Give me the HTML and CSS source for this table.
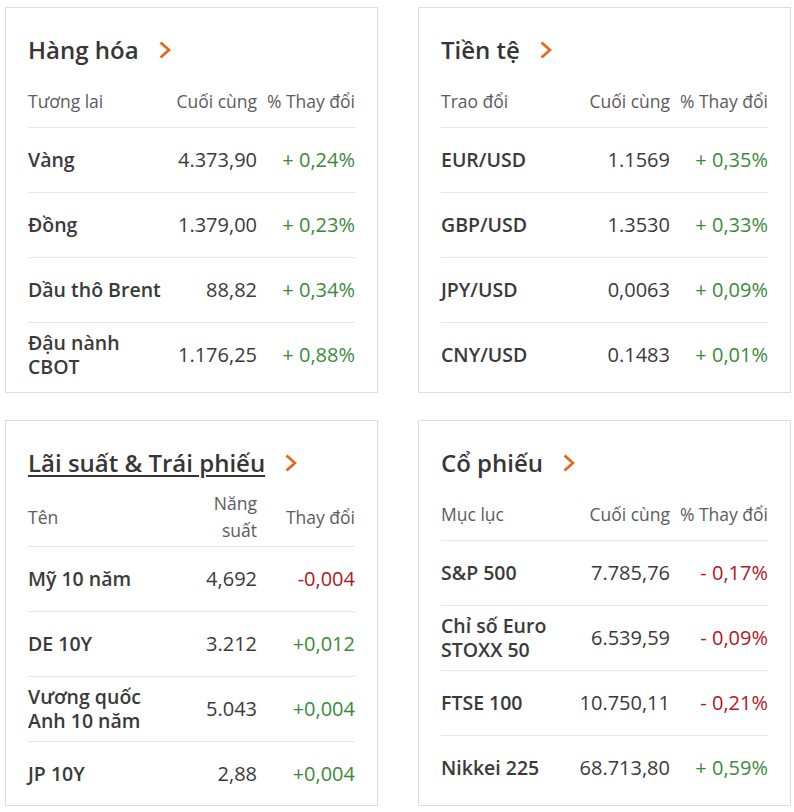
FILE: index.html
```html
<!DOCTYPE html>
<html lang="vi">
<head>
<meta charset="utf-8">
<title>Thị trường</title>
<link rel="stylesheet" href="styles.css">
</head>
<body>
<div class="grid">

  <section class="card">
    <h2 class="title"><span>Hàng hóa</span><svg class="chev" viewBox="0 0 12 18" width="12" height="18"><path d="M1.5 1.5 L10 9 L1.5 16.5"/></svg></h2>
    <div class="thead"><div>Tương lai</div><div class="num nw">Cuối cùng</div><div class="num nw">% Thay đổi</div></div>
    <div class="row"><div class="name">Vàng</div><div class="num">4.373,90</div><div class="num up">+ 0,24%</div></div>
    <div class="row"><div class="name">Đồng</div><div class="num">1.379,00</div><div class="num up">+ 0,23%</div></div>
    <div class="row"><div class="name">Dầu thô Brent</div><div class="num">88,82</div><div class="num up">+ 0,34%</div></div>
    <div class="row"><div class="name">Đậu nành CBOT</div><div class="num">1.176,25</div><div class="num up">+ 0,88%</div></div>
  </section>

  <section class="card">
    <h2 class="title"><span>Tiền tệ</span><svg class="chev" viewBox="0 0 12 18" width="12" height="18"><path d="M1.5 1.5 L10 9 L1.5 16.5"/></svg></h2>
    <div class="thead"><div>Trao đổi</div><div class="num nw">Cuối cùng</div><div class="num nw">% Thay đổi</div></div>
    <div class="row"><div class="name">EUR/USD</div><div class="num">1.1569</div><div class="num up">+ 0,35%</div></div>
    <div class="row"><div class="name">GBP/USD</div><div class="num">1.3530</div><div class="num up">+ 0,33%</div></div>
    <div class="row"><div class="name">JPY/USD</div><div class="num">0,0063</div><div class="num up">+ 0,09%</div></div>
    <div class="row"><div class="name">CNY/USD</div><div class="num">0.1483</div><div class="num up">+ 0,01%</div></div>
  </section>

  <section class="card">
    <h2 class="title"><span class="link">Lãi suất &amp; Trái phiếu</span><svg class="chev" viewBox="0 0 12 18" width="12" height="18"><path d="M1.5 1.5 L10 9 L1.5 16.5"/></svg></h2>
    <div class="thead"><div>Tên</div><div class="num">Năng suất</div><div class="num nw">Thay đổi</div></div>
    <div class="row"><div class="name">Mỹ 10 năm</div><div class="num">4,692</div><div class="num down">-0,004</div></div>
    <div class="row"><div class="name">DE 10Y</div><div class="num">3.212</div><div class="num up">+0,012</div></div>
    <div class="row"><div class="name">Vương quốc Anh 10 năm</div><div class="num">5.043</div><div class="num up">+0,004</div></div>
    <div class="row"><div class="name">JP 10Y</div><div class="num">2,88</div><div class="num up">+0,004</div></div>
  </section>

  <section class="card">
    <h2 class="title"><span>Cổ phiếu</span><svg class="chev" viewBox="0 0 12 18" width="12" height="18"><path d="M1.5 1.5 L10 9 L1.5 16.5"/></svg></h2>
    <div class="thead"><div>Mục lục</div><div class="num nw">Cuối cùng</div><div class="num nw">% Thay đổi</div></div>
    <div class="row"><div class="name">S&amp;P 500</div><div class="num">7.785,76</div><div class="num down">- 0,17%</div></div>
    <div class="row"><div class="name">Chỉ số Euro STOXX 50</div><div class="num">6.539,59</div><div class="num down">- 0,09%</div></div>
    <div class="row"><div class="name">FTSE 100</div><div class="num">10.750,11</div><div class="num down">- 0,21%</div></div>
    <div class="row"><div class="name">Nikkei 225</div><div class="num">68.713,80</div><div class="num up">+ 0,59%</div></div>
  </section>

</div>
</body>
</html>
```

FILE: styles.css
```css
html, body {
  margin: 0;
  background: #ffffff;
}

body {
  padding: 7px 0 0 5px;
  font-family: "Open Sans", "Noto Sans", "DejaVu Sans", sans-serif;
  color: #404040;
}

.grid {
  display: grid;
  grid-template-columns: 373px 373px;
  grid-auto-rows: 386px;
  column-gap: 40px;
  row-gap: 27px;
}

.card {
  box-sizing: border-box;
  border: 1px solid #dedede;
  padding: 26px 22px 0 22px;
}

.title {
  margin: 0 0 9px;
  display: flex;
  align-items: center;
  gap: 20px;
  font-size: 24px;
  line-height: 32px;
  font-weight: 600;
  color: #363636;
}

.title .link {
  text-decoration: underline;
  text-decoration-thickness: 1.5px;
  text-underline-offset: 3px;
}

.chev {
  display: block;
  flex: none;
}

.chev path {
  fill: none;
  stroke: #e8661e;
  stroke-width: 2.8;
}

.thead,
.row {
  display: grid;
  grid-template-columns: minmax(0, 1fr) 80px 88px;
  column-gap: 10px;
  align-items: center;
  box-sizing: border-box;
}

.thead {
  min-height: 52px;
  padding: 2px 0;
  font-size: 17.5px;
  line-height: 27px;
  font-weight: 500;
  color: #5c5c5c;
}

.row {
  height: 65px;
  border-top: 1px solid #e6e6e6;
  font-size: 20px;
  line-height: 24px;
  color: #3a3a3a;
}

.name {
  font-weight: 600;
  font-size: 19.5px;
  color: #3a3a3a;
}

.num {
  display: flex;
  justify-content: flex-end;
  text-align: right;
}

.row .num,
.nw {
  white-space: nowrap;
}

.up {
  color: #3b8a3b;
}

.down {
  color: #b0171f;
}
```
